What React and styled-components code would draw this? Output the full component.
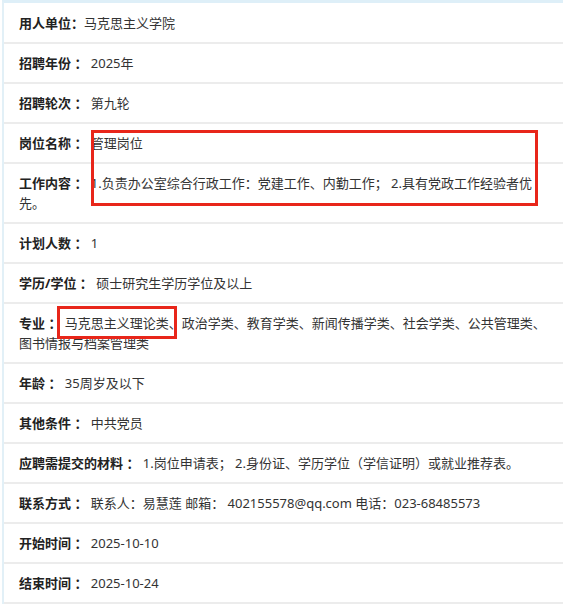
import React from "react";
import styled, { createGlobalStyle } from "styled-components";

const Global = createGlobalStyle`
  html, body { margin: 0; padding: 0; background: #fff; }
  body {
    font-family: "Noto Sans", "Noto Sans CJK SC", sans-serif;
    font-size: 13px;
    color: #333;
  }
`;

const Page = styled.div`
  position: relative;
  padding-left: 2px;
  width: 561px;
  height: 607px;
  overflow: hidden;
`;

const Panel = styled.div`
  border-left: 2px solid #e2f0f7;
  border-top: 3px solid #deeff8;
  padding-top: 1px;
  background: #fff;
`;

const Row = styled.div`
  padding: 9px 10px 9px 15px;
  line-height: 20px;
  border-bottom: 2px solid #ececec;
  color: #333;
  word-break: normal;
`;

const Label = styled.b`
  font-weight: 700;
  color: #222;
`;

const Mark = styled.div`
  position: absolute;
  border: 3px solid #e8261a;
  box-sizing: border-box;
  pointer-events: none;
`;

const rows = [
  ["用人单位：", "马克思主义学院", true],
  ["招聘年份 ：", "2025年"],
  ["招聘轮次 ：", "第九轮"],
  ["岗位名称 ：", "管理岗位"],
  ["工作内容 ：", "1.负责办公室综合行政工作：党建工作、内勤工作； 2.具有党政工作经验者优先。"],
  ["计划人数 ：", "1"],
  ["学历/学位 ：", "硕士研究生学历学位及以上"],
  ["专业 ：", "马克思主义理论类、政治学类、教育学类、新闻传播学类、社会学类、公共管理类、图书情报与档案管理类"],
  ["年龄 ：", "35周岁及以下"],
  ["其他条件 ：", "中共党员"],
  ["应聘需提交的材料 ：", "1.岗位申请表； 2.身份证、学历学位（学信证明）或就业推荐表。"],
  ["联系方式 ：", "联系人：易慧莲 邮箱： 402155578@qq.com 电话：023-68485573"],
  ["开始时间 ：", "2025-10-10"],
  ["结束时间 ：", "2025-10-24"],
];

export default function App() {
  return (
    <>
      <Global />
      <Page>
        <Panel>
          {rows.map(([label, value, tight]) => (
            <Row key={label}>
              <Label>{label}</Label>
              {tight ? value : " " + value}
            </Row>
          ))}
        </Panel>
        <Mark style={{ left: 91, top: 130, width: 447, height: 76 }} />
        <Mark style={{ left: 57, top: 306, width: 120, height: 33 }} />
      </Page>
    </>
  );
}
